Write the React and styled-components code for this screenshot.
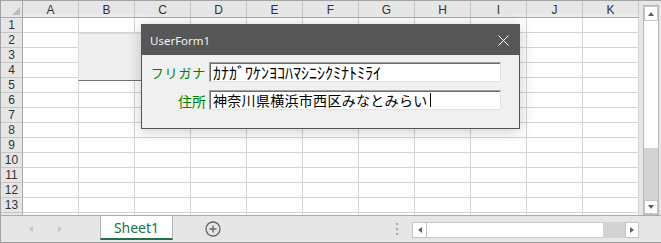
import React from "react";
import styled, { createGlobalStyle } from "styled-components";

const GlobalStyle = createGlobalStyle`
  html, body {
    margin: 0;
    padding: 0;
    background: #ffffff;
  }
  body {
    font-family: "Liberation Sans", "Noto Sans CJK JP", sans-serif;
  }
  * {
    box-sizing: border-box;
  }
`;

const COLS = ["A", "B", "C", "D", "E", "F", "G", "H", "I", "J", "K"];
// 13 full rows; the 14th only peeks out 2px above the tab bar
const ROWS = Array.from({ length: 14 }, (_, i) => i + 1);

const Window = styled.div`
  position: relative;
  width: 661px;
  height: 243px;
  display: flex;
  flex-direction: column;
  background: #e6e6e6;
  border-top: 1px solid #a3a3a3;
  border-left: 1px solid #a3a3a3;
  border-bottom: 1px solid #9c9c9c;
  overflow: hidden;
`;

const MainArea = styled.div`
  display: flex;
  height: 214px;
`;

const Sheet = styled.div`
  display: grid;
  grid-template-columns: 22px repeat(11, 56px);
  grid-template-rows: 17px;
  grid-auto-rows: 15px;
  width: 638px;
  height: 214px;
  overflow: hidden;
  background: #ffffff;
`;

const Corner = styled.div`
  position: relative;
  background: #e6e6e6;
  border-right: 1px solid #a8a8a8;
  border-bottom: 1px solid #a8a8a8;

  &::after {
    content: "";
    position: absolute;
    right: 2px;
    bottom: 2px;
    border-style: solid;
    border-width: 0 0 8px 8px;
    border-color: transparent transparent #bdbdbd transparent;
  }
`;

const ColHeader = styled.div`
  display: flex;
  align-items: center;
  justify-content: center;
  background: linear-gradient(#e6e6e6 75%, #efefef);
  border-right: 1px solid #c6c6c6;
  border-bottom: 1px solid #a8a8a8;
  color: #333333;
  font-size: 12px;
  padding-top: 1px;
`;

const RowHeader = styled.div`
  display: flex;
  align-items: center;
  justify-content: center;
  background: #e6e6e6;
  border-right: 1px solid #a8a8a8;
  border-bottom: 1px solid #c6c6c6;
  color: #333333;
  font-size: 12px;
`;

const Cell = styled.div`
  border-right: 1px solid #d4d4d4;
  border-bottom: 1px solid #d4d4d4;
`;

const VScrollArea = styled.div`
  flex: 1;
  padding: 4px 0 0 4px;
`;

const VScrollBar = styled.div`
  width: 16px;
  height: 210px;
  display: flex;
  flex-direction: column;
  background: #ffffff;
  border: 1px solid #b9b9b9;
`;

const ArrowBox = styled.div`
  display: flex;
  align-items: center;
  justify-content: center;
  flex: 0 0 ${(p) => p.$size}px;
  background: #ffffff;
  border: 1px solid #c6c6c6;
`;

const Track = styled.div`
  flex: 1;
  background: #ffffff;
`;

const Dotted = styled.div`
  flex: 0 0 ${(p) => p.$size}px;
  background-color: #dcdcdc;
  background-image: radial-gradient(#c8c8c8 0.6px, transparent 0.8px);
  background-size: 2px 2px;
`;

const SheetButton = styled.div`
  position: absolute;
  left: 77px;
  top: 32px;
  width: 132px;
  height: 48px;
  background: #efefef;
  border: 1px solid #dadada;
  border-bottom-color: #6f6f6f;
  border-right-color: #6f6f6f;
`;

const Dialog = styled.div`
  position: absolute;
  left: 140px;
  top: 23px;
  width: 379px;
  height: 105px;
  display: flex;
  flex-direction: column;
  border: 1px solid #555555;
  background: #f0f0f0;
  box-shadow: 0 2px 14px rgba(0, 0, 0, 0.22);
`;

const TitleBar = styled.div`
  display: flex;
  align-items: center;
  justify-content: space-between;
  height: 30px;
  padding: 0 10px 0 8px;
  background: #575757;
  color: #f4f4f4;
  font-family: "Noto Sans", sans-serif;
  font-size: 11.5px;
`;

const CloseIcon = styled.svg`
  display: block;
  width: 11px;
  height: 11px;
`;

const FormBody = styled.div`
  display: grid;
  grid-template-columns: 1fr 292px;
  grid-auto-rows: 20px;
  column-gap: 3px;
  row-gap: 8px;
  padding: 7px 18px 0 8px;
`;

const Label = styled.div`
  display: flex;
  align-items: center;
  justify-content: flex-end;
  color: #008000;
  font-family: "Noto Sans CJK JP", sans-serif;
  font-size: ${(p) => p.$size}px;
  letter-spacing: ${(p) => p.$spacing}px;
  padding-top: 1px;
`;

const TextBox = styled.div`
  display: flex;
  align-items: center;
  padding-left: 3px;
  background: #ffffff;
  border: 1px solid;
  border-color: #a0a0a0 #e3e3e3 #e3e3e3 #a0a0a0;
  box-shadow: inset 1px 1px 0 #6d6d6d;
  color: #000000;
  font-family: "Noto Sans CJK JP", sans-serif;
  font-size: ${(p) => p.$size}px;
  letter-spacing: ${(p) => p.$spacing}px;
  line-height: 18px;
  white-space: nowrap;
`;

const Caret = styled.span`
  display: inline-block;
  width: 1px;
  height: 14px;
  margin-left: 2px;
  background: #000000;
`;

const TabBar = styled.div`
  display: flex;
  align-items: center;
  height: 27px;
  border-top: 1px solid #ababab;
  background: #e6e6e6;
`;

const NavArrows = styled.div`
  display: flex;
  align-items: center;
  gap: 23px;
  width: 99px;
  padding-left: 27px;
`;

const SheetTab = styled.div`
  display: flex;
  align-items: center;
  justify-content: center;
  align-self: flex-start;
  width: 73px;
  height: 24px;
  background: #ffffff;
  border-left: 1px solid #b4b4b4;
  border-right: 1px solid #b4b4b4;
  border-bottom: 2px solid #217346;
  color: #217346;
  font-family: "Noto Sans", sans-serif;
  font-size: 14px;
  padding-top: 1px;
`;

const AddSheet = styled.svg`
  display: block;
  width: 16px;
  height: 16px;
  margin-left: 32px;
`;

const Spacer = styled.div`
  flex: 1;
`;

const Dots = styled.div`
  display: flex;
  flex-direction: column;
  gap: 3px;
  margin-right: 14px;
`;

const Dot = styled.span`
  width: 2px;
  height: 2px;
  background: #a6a6a6;
`;

const HScrollBar = styled.div`
  display: flex;
  width: 227px;
  height: 16px;
  margin-right: 22px;
  margin-top: 1px;
`;

const HTrack = styled.div`
  flex: 1;
  background: #ffffff;
  border-top: 1px solid #c6c6c6;
  border-bottom: 1px solid #c6c6c6;
`;

const Tri = ({ dir, color = "#606060", size = 6 }) => {
  const pts = {
    up: "0,5 3,1 6,5",
    down: "0,1 3,5 6,1",
    left: "5,0 1,3 5,6",
    right: "1,0 5,3 1,6",
  }[dir];
  return (
    <svg width={size} height={size} viewBox="0 0 6 6">
      <polygon points={pts} fill={color} />
    </svg>
  );
};

export default function App() {
  return (
    <>
      <GlobalStyle />
      <Window>
        <MainArea>
          <Sheet>
            <Corner />
            {COLS.map((c) => (
              <ColHeader key={c}>{c}</ColHeader>
            ))}
            {ROWS.map((r) => (
              <React.Fragment key={r}>
                <RowHeader>{r <= 13 ? r : ""}</RowHeader>
                {COLS.map((c) => (
                  <Cell key={c} />
                ))}
              </React.Fragment>
            ))}
          </Sheet>
          <VScrollArea>
            <VScrollBar>
              <ArrowBox $size={15}>
                <Tri dir="up" />
              </ArrowBox>
              <Track />
              <Dotted $size={52} />
              <ArrowBox $size={14}>
                <Tri dir="down" />
              </ArrowBox>
            </VScrollBar>
          </VScrollArea>
        </MainArea>

        <TabBar>
          <NavArrows>
            <Tri dir="left" color="#c4c4c4" />
            <Tri dir="right" color="#c4c4c4" />
          </NavArrows>
          <SheetTab>Sheet1</SheetTab>
          <AddSheet viewBox="0 0 16 16">
            <circle cx="8" cy="8" r="7" fill="none" stroke="#666666" strokeWidth="1.3" />
            <path d="M8 4.5v7M4.5 8h7" stroke="#666666" strokeWidth="1.4" />
          </AddSheet>
          <Spacer />
          <Dots>
            <Dot />
            <Dot />
            <Dot />
          </Dots>
          <HScrollBar>
            <ArrowBox $size={15}>
              <Tri dir="left" />
            </ArrowBox>
            <HTrack />
            <Dotted $size={22} />
            <ArrowBox $size={14}>
              <Tri dir="right" />
            </ArrowBox>
          </HScrollBar>
        </TabBar>

        <SheetButton />

        <Dialog>
          <TitleBar>
            <span>UserForm1</span>
            <CloseIcon viewBox="0 0 11 11">
              <path d="M0.5 0.5L10.5 10.5M10.5 0.5L0.5 10.5" stroke="#ffffff" strokeWidth="1" />
            </CloseIcon>
          </TitleBar>
          <FormBody>
            <Label $size={13} $spacing={0.8}>フリガナ</Label>
            <TextBox $size={16} $spacing={0}>ｶﾅｶﾞﾜｹﾝﾖｺﾊﾏｼﾆｼｸﾐﾅﾄﾐﾗｲ</TextBox>
            <Label $size={14} $spacing={0}>住所</Label>
            <TextBox $size={14} $spacing={0.3}>
              神奈川県横浜市西区みなとみらい
              <Caret />
            </TextBox>
          </FormBody>
        </Dialog>
      </Window>
    </>
  );
}
